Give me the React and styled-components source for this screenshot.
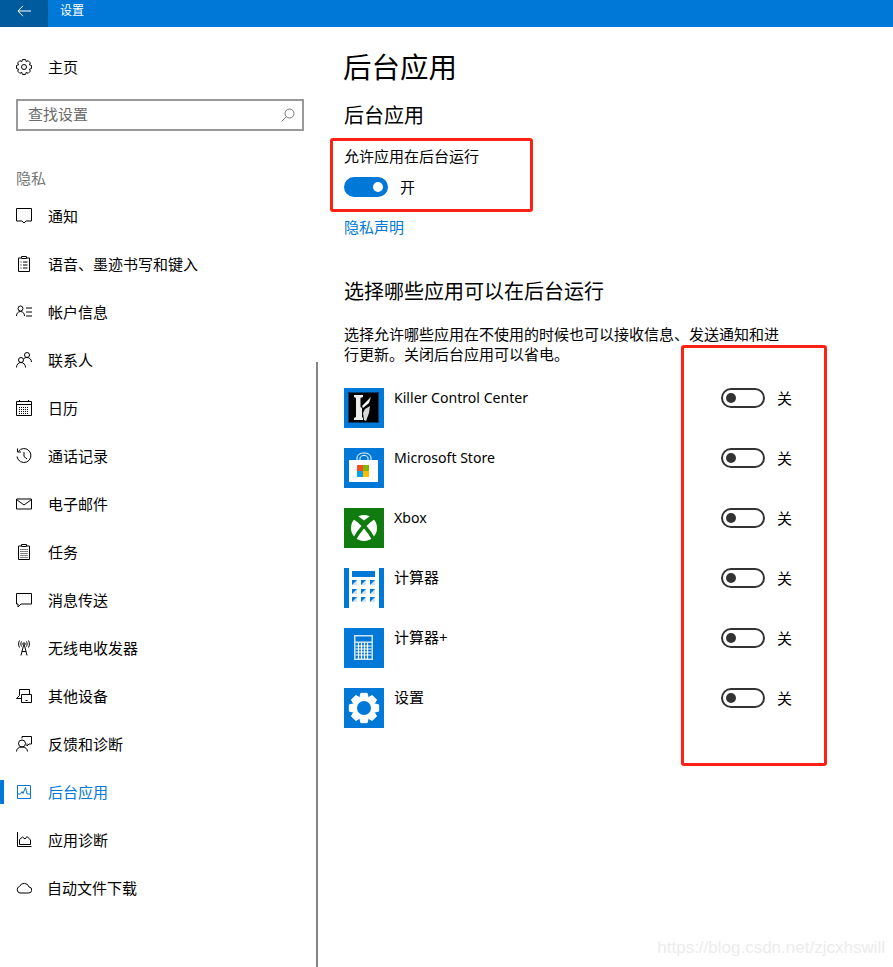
import React from "react";
import styled, { createGlobalStyle } from "styled-components";

const GlobalStyle = createGlobalStyle`
  html, body { margin: 0; padding: 0; background: #fff; }
  body {
    width: 893px;
    height: 967px;
    overflow: hidden;
    font-family: "Noto Sans", "Noto Sans CJK SC", sans-serif;
    color: #000;
  }
`;

const Page = styled.div`
  position: relative;
  width: 893px;
  height: 967px;
  overflow: hidden;
`;

const TitleBar = styled.header`
  display: flex;
  align-items: center;
  height: 27px;
  background: #0078d7;
  color: #fff;
`;

// the window is cropped at the top, so the bar's content sits above its middle
const BackButton = styled.div`
  display: flex;
  align-items: center;
  justify-content: center;
  box-sizing: border-box;
  width: 48px;
  height: 27px;
  padding-bottom: 6px;
  background: #005a9e;
`;

const TitleText = styled.span`
  margin-left: 12px;
  padding-bottom: 6px;
  font-size: 12px;
  line-height: 16px;
`;

const Body = styled.div`
  display: flex;
  height: 940px;
`;

const Sidebar = styled.nav`
  flex: 0 0 316px;
  padding-top: 16px;
  box-sizing: border-box;
`;

const ScrollRail = styled.div`
  flex: 0 0 2px;
  height: 605px;
  align-self: flex-end;
  background: #858585;
`;

const NavRow = styled.div`
  position: relative;
  display: flex;
  align-items: center;
  gap: ${(p) => p.$gap || 16}px;
  height: 48px;
  padding-left: 16px;
  font-size: 15px;
  color: ${(p) => (p.$active ? "#0078d7" : "#000")};

  &::before {
    content: "";
    display: ${(p) => (p.$active ? "block" : "none")};
    position: absolute;
    left: 0;
    top: 12px;
    width: 4px;
    height: 24px;
    background: #0078d7;
  }
`;

const NavText = styled.span`
  padding-bottom: 2px;
`;

const NavIcon = styled.svg`
  flex: 0 0 16px;
  width: 16px;
  height: 16px;
  fill: none;
  stroke: currentColor;
  stroke-width: 1;
`;

const SearchBox = styled.div`
  display: flex;
  align-items: center;
  justify-content: space-between;
  box-sizing: border-box;
  width: 288px;
  height: 32px;
  margin: 8px 0 0 16px;
  padding: 0 7px 0 10px;
  border: 2px solid #999;
  font-size: 15px;
  color: #6b6b6b;
`;

const SearchText = styled.span`
  padding-bottom: 3px;
`;

const SectionLabel = styled.div`
  margin: 37px 0 4px 16px;
  font-size: 15px;
  line-height: 20px;
  color: #767676;
`;

const Main = styled.main`
  flex: 1;
  padding: 20px 0 0 26px;
`;

const PageTitle = styled.h1`
  margin: 0 0 0 -1px;
  font-size: 28.5px;
  font-weight: 400;
  line-height: 40px;
`;

const SubTitle = styled.h2`
  margin: ${(p) => p.$top}px 0 0;
  padding-top: 1px;
  font-size: 20px;
  font-weight: 400;
  line-height: 27px;
`;

const FieldLabel = styled.div`
  margin-top: 18px;
  padding-bottom: 1px;
  font-size: 15px;
  line-height: 19px;
`;

const SwitchRow = styled.div`
  display: flex;
  align-items: center;
  gap: 12px;
  margin-top: ${(p) => p.$top || 0}px;
  font-size: 15px;
  line-height: 20px;
`;

const Switch = styled.div`
  flex: 0 0 44px;
  display: flex;
  align-items: center;
  justify-content: ${(p) => (p.$on ? "flex-end" : "flex-start")};
  box-sizing: border-box;
  width: 44px;
  height: 20px;
  padding: 0 3px;
  border: 2px solid ${(p) => (p.$on ? "#0078d7" : "#333")};
  border-radius: 10px;
  background: ${(p) => (p.$on ? "#0078d7" : "#fff")};

  &::after {
    content: "";
    width: 10px;
    height: 10px;
    border-radius: 50%;
    background: ${(p) => (p.$on ? "#fff" : "#333")};
  }
`;

const PrivacyLink = styled.div`
  margin-top: 20px;
  font-size: 15px;
  line-height: 20px;
  color: #0078d7;
`;

const Description = styled.p`
  width: 440px;
  margin: 19px 0 0;
  font-size: 15px;
  line-height: 20px;
`;

const AppList = styled.div`
  margin-top: 24px;
`;

const AppRow = styled.div`
  display: flex;
  align-items: flex-start;
  height: 60px;
`;

const AppTile = styled.svg`
  flex: 0 0 40px;
  width: 40px;
  height: 40px;
  margin-right: 10px;
`;

const AppName = styled.div`
  flex: 0 0 327px;
  font-size: ${(p) => (p.$latin ? "14.1px" : "15px")};
  line-height: ${(p) => (p.$latin ? "20px" : "18px")};
`;

const Callout = styled.div`
  position: absolute;
  left: ${(p) => p.$x}px;
  top: ${(p) => p.$y}px;
  width: ${(p) => p.$w}px;
  height: ${(p) => p.$h}px;
  box-sizing: border-box;
  border: 3px solid #ff2116;
  border-radius: 3px;
`;

const Watermark = styled.div`
  position: absolute;
  right: 8px;
  bottom: 9px;
  font-family: "Liberation Sans", sans-serif;
  font-size: 17px;
  line-height: 20px;
  color: #ececec;
`;

// gear outline, used by the home row and the settings tile
const gearPath = (cx, cy, outer, inner, teeth = 8) => {
  const pts = [];
  const step = (Math.PI * 2) / teeth;
  for (let i = 0; i < teeth; i++) {
    const a = i * step - Math.PI / 2;
    [
      [inner, -0.5],
      [outer, -0.27],
      [outer, 0.27],
      [inner, 0.5],
    ].forEach(([r, k]) => {
      const t = a + k * step;
      pts.push(`${(cx + r * Math.cos(t)).toFixed(2)} ${(cy + r * Math.sin(t)).toFixed(2)}`);
    });
  }
  return `M${pts.join("L")}Z`;
};

const Icon = ({ children }) => <NavIcon viewBox="0 0 16 16">{children}</NavIcon>;

const Clipboard = ({ dense }) => (
  <>
    <path d="M5 2H2.5V15.5H13.5V2H11" />
    <path d="M5.5 2.5V.5H10.5V2.5Z" />
    <path d={dense ? "M4.5 5.5H11.5M4.5 7.5H11.5M4.5 9.5H11.5M4.5 11.5H11.5M4.5 13.5H11.5" : "M4.5 6H5.5M7 6H11.5M4.5 9H5.5M7 9H11.5M4.5 12H5.5M7 12H11.5"} strokeDasharray={dense ? "1 1" : undefined} />
  </>
);

const icons = {
  home: (
    <Icon>
      <path d={gearPath(8, 8, 7.6, 5.8)} />
      <circle cx="8" cy="8" r="2.5" />
    </Icon>
  ),
  notice: (
    <Icon>
      <path d="M.5 .5H15.5V13H10L8 15L6 13H.5Z" />
    </Icon>
  ),
  speech: (
    <Icon>
      <Clipboard />
    </Icon>
  ),
  account: (
    <Icon>
      <circle cx="4.5" cy="4.5" r="2.5" />
      <path d="M.5 12C.5 9.5 2 7.5 4.5 7.5S8.5 9.5 8.5 12M10 4H16M10 8H16M10 12H16" />
    </Icon>
  ),
  contacts: (
    <Icon>
      <circle cx="5" cy="8" r="2.5" />
      <path d="M.5 15.5C.5 12.5 2.5 10.5 5 10.5S9.5 12.5 9.5 15.5" />
      <circle cx="11" cy="3" r="2.5" />
      <path d="M7.5 7C8.2 6 9.5 5.5 11 5.5C13.5 5.5 15.5 7.5 15.5 10" />
    </Icon>
  ),
  calendar: (
    <Icon>
      <path d="M.5 1.5H15.5V15.5H.5ZM.5 4.5H15.5M3.5 0V2M12.5 0V2" />
      <path d="M3 7.5H13M3 9.5H13M3 11.5H13M3 13.5H13" strokeDasharray="1 1" />
    </Icon>
  ),
  history: (
    <Icon>
      <path d="M2.2 3.5A7 7 0 1 1 1 8.5" />
      <path d="M1.5 .5V4H5M8 4V8.5L11 11" />
    </Icon>
  ),
  mail: (
    <Icon>
      <path d="M.5 3H15.5V13H.5ZM.5 3.5L8 9L15.5 3.5" />
    </Icon>
  ),
  tasks: (
    <Icon>
      <Clipboard dense />
    </Icon>
  ),
  message: (
    <Icon>
      <path d="M.5 1.5H15.5V12H5L2 15V12H.5Z" />
    </Icon>
  ),
  radio: (
    <Icon>
      <path d="M5 15.5L7.5 5.5H8.5L11 15.5M6 11.5H10" />
      <circle cx="8" cy="4" r="1.2" />
      <path d="M5.5 1.5C4.7 3 4.7 5 5.5 6.5M10.5 1.5C11.3 3 11.3 5 10.5 6.5M3.5 .5C2.3 2.5 2.3 5.5 3.5 7.5M12.5 .5C13.7 2.5 13.7 5.5 12.5 7.5" />
    </Icon>
  ),
  devices: (
    <Icon>
      <path d="M5.5 10.5H.5L3.5 7.5V1.5H13.5V6" />
      <path d="M5.5 6.5H15.5V14.5H5.5ZM9.5 12.5H11.5" />
    </Icon>
  ),
  feedback: (
    <Icon>
      <circle cx="6" cy="7.5" r="3.5" />
      <path d="M.5 15.5C.5 13 2.5 11 6 11S11.5 13 11.5 15.5" />
      <path d="M6 2.5V.5H15.5V8H13L11 10V7.5" />
    </Icon>
  ),
  background: (
    <Icon>
      <path d="M1.5 1.5H14.5V14.5H1.5ZM1.5 10H4.5L6 7.5L7 9.5L9.5 3.5L11 10H14.5" />
    </Icon>
  ),
  diagnostics: (
    <Icon>
      <path d="M1.5 0V14.5H15.5M3.5 12.5V7.5L6.5 5L9 7L11 4.5L14.5 8V12.5Z" />
    </Icon>
  ),
  cloud: (
    <Icon>
      <path d="M4 13H12.5A3 3 0 0 0 13 7A5 5 0 0 0 3.6 6.4A3.4 3.4 0 0 0 4 13Z" />
    </Icon>
  ),
};

const navItems = [
  ["通知", "notice"],
  ["语音、墨迹书写和键入", "speech"],
  ["帐户信息", "account"],
  ["联系人", "contacts"],
  ["日历", "calendar"],
  ["通话记录", "history"],
  ["电子邮件", "mail"],
  ["任务", "tasks"],
  ["消息传送", "message"],
  ["无线电收发器", "radio"],
  ["其他设备", "devices"],
  ["反馈和诊断", "feedback"],
  ["后台应用", "background", true],
  ["应用诊断", "diagnostics"],
  ["自动文件下载", "cloud", false, 15],
];

const KillerTile = () => (
  <AppTile viewBox="0 0 40 40">
    <rect width="40" height="40" fill="#0078d7" />
    <rect x="4.5" y="4.5" width="30" height="30" fill="#000" stroke="#0a3a66" />
    <path d="M10 7H19V9L16.5 10V19L18 20V29L19 30V32H10V30L12 29V10L10 9Z" fill="#ececec" />
    <path d="M18 18L27 9L25 15L19 20Z" fill="#f4f4f4" />
    <path d="M26 18L25 25L22 33L20 32L19 25L21 21Z" fill="#d8d8d8" />
  </AppTile>
);

const StoreTile = () => (
  <AppTile viewBox="0 0 40 40">
    <rect width="40" height="40" fill="#0078d7" />
    <path d="M13 13V10C13 7 16 5 20 5S27 7 27 10V13M16 13V10C16 8.5 18 7.5 20 7.5S24 8.5 24 10V13" fill="none" stroke="#fff" />
    <path d="M5 12H34V34H5Z" fill="#fff" />
    <rect x="13" y="17" width="6" height="6" fill="#f25022" />
    <rect x="19" y="17" width="6" height="6" fill="#7fba00" />
    <rect x="13" y="23" width="6" height="6" fill="#00a4ef" />
    <rect x="19" y="23" width="6" height="6" fill="#ffb900" />
  </AppTile>
);

const XboxTile = () => (
  <AppTile viewBox="0 0 40 40">
    <rect width="40" height="40" fill="#107c10" />
    <circle cx="20" cy="20" r="13" fill="#fff" />
    <path
      d="M13 7.5Q17 10 20 12.5Q23 10 27 7.5L31 11Q26 14 22.5 18Q28 24 30.5 29.5L28 32Q24 25 20 20.5Q16 25 12 32L9.5 29.5Q12 24 17.5 18Q14 14 9 11Z"
      fill="#107c10"
    />
  </AppTile>
);

const CalcTile = () => (
  <AppTile viewBox="0 0 40 40">
    <rect width="40" height="40" fill="#fff" />
    <rect width="5" height="40" fill="#0078d7" />
    <rect x="35" width="5" height="40" fill="#0078d7" />
    <rect x="8" y="3" width="23" height="6" fill="#0078d7" />
    {[8, 17, 26].flatMap((x) =>
      [12, 21, 29].map((y) => (
        <g key={`${x}-${y}`}>
          <rect x={x} y={y} width="5" height="5" fill="#cfe4f7" />
          <path d={`M${x} ${y}H${x + 5}L${x} ${y + 5}Z`} fill="#0078d7" />
        </g>
      ))
    )}
  </AppTile>
);

const CalcPlusTile = () => (
  <AppTile viewBox="0 0 40 40">
    <rect width="40" height="40" fill="#0078d7" />
    <rect x="10" y="7" width="19" height="25" fill="#cfe4f7" />
    <rect x="11.5" y="8.5" width="16" height="5" fill="#0078d7" />
    <rect x="11.5" y="15" width="16" height="15.5" fill="#0078d7" />
    <path d="M14.5 15V31M17.5 15V31M20.5 15V31M23.5 15V31M11.5 18H27.5M11.5 21H27.5M11.5 24H27.5M11.5 27H27.5" stroke="#fff" strokeWidth="1.2" />
  </AppTile>
);

const SettingsTile = () => (
  <AppTile viewBox="0 0 40 40">
    <rect width="40" height="40" fill="#0078d7" />
    <path d={gearPath(20, 20, 15, 11)} fill="#fff" stroke="#fff" strokeLinejoin="round" strokeWidth="1" />
    <circle cx="20" cy="20" r="7" fill="#0078d7" />
  </AppTile>
);

const apps = [
  ["Killer Control Center", KillerTile, true],
  ["Microsoft Store", StoreTile, true],
  ["Xbox", XboxTile, true],
  ["计算器", CalcTile],
  ["计算器+", CalcPlusTile],
  ["设置", SettingsTile],
];

export default function App() {
  return (
    <Page>
      <GlobalStyle />
      <TitleBar>
        <BackButton>
          <svg width="14" height="12" viewBox="0 0 14 12" fill="none" stroke="#fff" strokeWidth="1">
            <path d="M1 6H14M6 .8L.9 6L6 11.2" />
          </svg>
        </BackButton>
        <TitleText>设置</TitleText>
      </TitleBar>
      <Body>
        <Sidebar>
          <NavRow>
            {icons.home}
            <NavText>主页</NavText>
          </NavRow>
          <SearchBox>
            <SearchText>查找设置</SearchText>
            <svg width="14" height="14" viewBox="0 0 14 14" fill="none" stroke="#767676" strokeWidth="1">
              <circle cx="8.5" cy="5.5" r="4.5" />
              <path d="M5.3 8.7L.5 13.5" />
            </svg>
          </SearchBox>
          <SectionLabel>隐私</SectionLabel>
          {navItems.map(([label, icon, active, gap]) => (
            <NavRow key={label} $active={active} $gap={gap}>
              {icons[icon]}
              <NavText>{label}</NavText>
            </NavRow>
          ))}
        </Sidebar>
        <ScrollRail />
        <Main>
          <PageTitle>后台应用</PageTitle>
          <SubTitle $top={14}>后台应用</SubTitle>
          <FieldLabel>允许应用在后台运行</FieldLabel>
          <SwitchRow $top={10}>
            <Switch $on />
            <span>开</span>
          </SwitchRow>
          <PrivacyLink>隐私声明</PrivacyLink>
          <SubTitle $top={40}>选择哪些应用可以在后台运行</SubTitle>
          <Description>
            选择允许哪些应用在不使用的时候也可以接收信息、发送通知和进行更新。关闭后台应用可以省电。
          </Description>
          <AppList>
            {apps.map(([name, Tile, latin]) => (
              <AppRow key={name}>
                <Tile />
                <AppName $latin={latin}>{name}</AppName>
                <SwitchRow>
                  <Switch />
                  <span>关</span>
                </SwitchRow>
              </AppRow>
            ))}
          </AppList>
        </Main>
      </Body>
      <Callout $x={330} $y={138} $w={203} $h={74} />
      <Callout $x={681} $y={345} $w={146} $h={421} />
      <Watermark>https://blog.csdn.net/zjcxhswill</Watermark>
    </Page>
  );
}
